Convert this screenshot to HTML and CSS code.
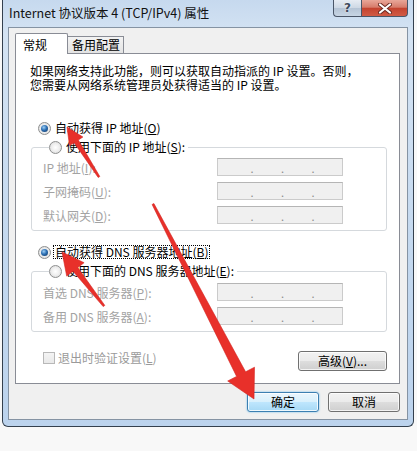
FILE: index.html
```html
<!DOCTYPE html>
<html lang="zh-CN">
<head>
<meta charset="utf-8">
<title>Internet 协议版本 4 (TCP/IPv4) 属性</title>
<link rel="stylesheet" href="styles.css">
</head>
<body>
<div class="window">
  <div class="titlebar">
    <div class="title">Internet 协议版本 4 (TCP/IPv4) 属性</div>
    <div class="caption-btns">
      <div class="cbtn help">?</div>
      <div class="cbtn close">
        <svg width="14" height="11" viewBox="0 0 14 11"><path d="M2 1.5 L12 9.5 M12 1.5 L2 9.5" stroke="#6b2a22" stroke-width="4" stroke-linecap="round"/><path d="M2 1.5 L12 9.5 M12 1.5 L2 9.5" stroke="#fff" stroke-width="2.2" stroke-linecap="round"/></svg>
      </div>
    </div>
  </div>
  <div class="client">
    <div class="tabs">
      <div class="tab active">常规</div>
      <div class="tab">备用配置</div>
    </div>
    <div class="panel">
      <p class="desc">如果网络支持此功能，则可以获取自动指派的 IP 设置。否则，<br>您需要从网络系统管理员处获得适当的 IP 设置。</p>

      <div class="radio-row r1"><span class="radio checked"></span><span class="lbl">自动获得 IP 地址(<u>O</u>)</span></div>
      <fieldset class="group g1">
        <legend><span class="radio"></span><span class="lbl">使用下面的 IP 地址(<u>S</u>):</span></legend>
        <div class="field"><span class="flabel">IP 地址(<u>I</u>):</span><span class="ipbox"><span class="seg"></span><span class="dot">.</span><span class="seg"></span><span class="dot">.</span><span class="seg"></span><span class="dot">.</span><span class="seg"></span></span></div>
        <div class="field"><span class="flabel">子网掩码(<u>U</u>):</span><span class="ipbox"><span class="seg"></span><span class="dot">.</span><span class="seg"></span><span class="dot">.</span><span class="seg"></span><span class="dot">.</span><span class="seg"></span></span></div>
        <div class="field"><span class="flabel">默认网关(<u>D</u>):</span><span class="ipbox"><span class="seg"></span><span class="dot">.</span><span class="seg"></span><span class="dot">.</span><span class="seg"></span><span class="dot">.</span><span class="seg"></span></span></div>
      </fieldset>

      <div class="radio-row r3"><span class="radio checked"></span><span class="lbl focus">自动获得 DNS 服务器地址(<u>B</u>)</span></div>
      <fieldset class="group g2">
        <legend><span class="radio"></span><span class="lbl">使用下面的 DNS 服务器地址(<u>E</u>):</span></legend>
        <div class="field"><span class="flabel">首选 DNS 服务器(<u>P</u>):</span><span class="ipbox"><span class="seg"></span><span class="dot">.</span><span class="seg"></span><span class="dot">.</span><span class="seg"></span><span class="dot">.</span><span class="seg"></span></span></div>
        <div class="field"><span class="flabel">备用 DNS 服务器(<u>A</u>):</span><span class="ipbox"><span class="seg"></span><span class="dot">.</span><span class="seg"></span><span class="dot">.</span><span class="seg"></span><span class="dot">.</span><span class="seg"></span></span></div>
      </fieldset>

      <div class="bottom-row">
        <div class="check"><span class="box"></span><span>退出时验证设置(<u>L</u>)</span></div>
        <button class="btn adv">高级(<u>V</u>)...</button>
      </div>
    </div>
    <div class="dlg-btns">
      <button class="btn default">确定</button>
      <button class="btn">取消</button>
    </div>
  </div>
</div>

<svg class="arrows" width="417" height="451" viewBox="0 0 417 451">
  <polygon points="99.8,176.5 78.3,140.0 82.9,137.0 67,127 69.5,145.6 74.1,142.7 98.2,177.5"/>
  <polygon points="104.8,305.4 77.8,267.6 84.1,262.7 62,252 66.7,276.1 73.0,271.2 103.2,306.6"/>
  <polygon points="153.9,203.5 245.6,371.8 254.5,367.2 254,399 227.7,381.0 236.6,376.4 152.1,204.5"/>
</svg>
</body>
</html>
```

FILE: styles.css
```css
* { box-sizing: border-box; }

html, body {
  margin: 0;
  padding: 0;
}

body {
  width: 417px;
  height: 451px;
  background: #f8f8f8;
  font-family: "Noto Sans CJK SC", "Noto Sans", sans-serif;
  font-size: 12px;
  color: #000;
  position: relative;
  overflow: hidden;
}

.window {
  margin-left: 2px;
  width: 412px;
  border: 1px solid #34404e;
  border-top: none;
  border-radius: 0 0 6px 6px;
  background: linear-gradient(180deg, #c6d9ee 0%, #d4e3f3 8%, #c3d8ef 60%, #bcd3ed 100%);
  padding: 0 5px 6px 5px;
}

.titlebar {
  height: 27px;
  display: flex;
  align-items: flex-start;
}

.title {
  padding: 4px 0 0 1px;
  line-height: 17px;
  font-size: 12.5px;
  color: #111;
  white-space: nowrap;
}

.caption-btns {
  margin-left: auto;
  display: flex;
}

.cbtn {
  height: 17px;
  border: 1px solid #4a5668;
  border-top: none;
  display: flex;
  align-items: center;
  justify-content: center;
}

.help {
  width: 28px;
  border-radius: 0 0 0 4px;
  border-right: none;
  background: linear-gradient(180deg, #e6ecf3 0%, #cdd8e4 50%, #b5c4d5 52%, #c7d5e4 100%);
  color: #3d4a5b;
  font-family: "DejaVu Sans", sans-serif;
  font-size: 12px;
  font-weight: bold;
  text-shadow: 0 0 2px #fff;
}

.close {
  width: 47px;
  border-radius: 0 0 4px 0;
  background: linear-gradient(180deg, #e9a799 0%, #d77c6b 45%, #c4432f 52%, #d15b45 100%);
}

.client {
  border: 1px solid #8593a3;
  background: #f0f0f0;
  padding: 5px 0 7px 0;
}

.tabs {
  display: flex;
  align-items: flex-end;
  height: 20px;
  margin-left: 6px;
}

.tab {
  border: 1px solid #898c95;
  border-bottom: none;
  background: linear-gradient(180deg, #f3f3f3, #e3e3e3);
  height: 17px;
  line-height: 15px;
  padding: 0 4px;
  width: 57px;
  margin-left: -1px;
  white-space: nowrap;
}

.tab.active {
  position: relative;
  z-index: 1;
  background: #fff;
  height: 21px;
  margin-bottom: -1px;
  margin-left: 0;
  width: 53px;
  padding: 2px 7px 0;
  line-height: 18px;
  border-radius: 2px 2px 0 0;
}

.panel {
  margin: 0 7px 0 6px;
  border: 1px solid #898c95;
  background: #fff;
  padding: 10px 12px 12px 14px;
}

.desc {
  margin: 0;
  line-height: 14px;
  white-space: nowrap;
}

.radio-row,
legend {
  display: flex;
  align-items: center;
  height: 16px;
  line-height: 16px;
  white-space: nowrap;
}

.radio-row {
  padding-left: 8px;
}

.r1 { margin-top: 28px; }
.r3 { margin-top: 13px; }

.radio {
  width: 13px;
  height: 13px;
  border-radius: 50%;
  border: 1px solid #8e8f8f;
  background: radial-gradient(circle at 50% 50%, #ffffff 0%, #f0f0f0 45%, #d4d4d4 100%);
  position: relative;
  flex: none;
}

.radio.checked::after {
  content: "";
  position: absolute;
  left: 2px;
  top: 2px;
  width: 7px;
  height: 7px;
  border-radius: 50%;
  background: radial-gradient(circle at 40% 35%, #9fd0f5 0%, #2c6fb4 45%, #0e2f58 100%);
}

.lbl {
  margin-left: 4px;
}

.lbl.focus {
  outline: 1px dotted #000;
  outline-offset: 0;
  line-height: 12px;
  padding: 0 1px;
  margin-left: 3px;
}

.group {
  margin: 3px 0 0 1px;
  border: 1px solid #d5d9dd;
  border-radius: 3px;
  padding: 3px 0 6px 11px;
  min-width: 0;
}

.group legend {
  margin-left: 6px;
  padding: 0 3px 0 0;
}

.g2 { padding-top: 4px; }

.field {
  display: flex;
  align-items: center;
  height: 18px;
  margin-bottom: 6px;
  color: #a3a3a3;
}

.field:last-child { margin-bottom: 0; }

.flabel {
  width: 174px;
  white-space: nowrap;
}

.ipbox {
  width: 126px;
  height: 18px;
  border: 1px solid #cbcbcb;
  border-top-color: #b5b5b5;
  background: #f0f0f0;
  display: flex;
  align-items: flex-end;
  padding: 0 0 1px 4px;
  color: #8a8a8a;
  line-height: 12px;
}

.seg { width: 30px; }
.dot { width: 2px; font-size: 11px; }

.bottom-row {
  margin-top: 19px;
  display: flex;
  align-items: flex-start;
  justify-content: space-between;
}

.check {
  display: flex;
  align-items: center;
  margin-left: 13px;
  margin-top: 1px;
  color: #9a9a9a;
  line-height: 12px;
  white-space: nowrap;
}

.box {
  width: 12px;
  height: 12px;
  border: 1px solid #b8b8b8;
  background: linear-gradient(180deg, #f4f4f4, #e9e9e9);
  margin-right: 3px;
}

.btn {
  font: inherit;
  color: #000;
  height: 20px;
  width: 72px;
  padding: 0;
  border: 1px solid #707070;
  border-radius: 3px;
  background: linear-gradient(180deg, #f2f2f2 0%, #ebebeb 48%, #dddddd 52%, #cfcfcf 100%);
  box-shadow: inset 0 0 0 1px rgba(255, 255, 255, 0.75);
  line-height: 16px;
  cursor: default;
}

.btn.adv {
  width: 89px;
}

.btn.default {
  border-color: #3c7fb1;
  background: linear-gradient(180deg, #eaf6fd 0%, #d9f0fc 48%, #bee6fd 52%, #a7d9f5 100%);
  box-shadow: inset 0 0 0 1px rgba(255, 255, 255, 0.8), 0 0 2px #62b7ea;
}

.dlg-btns {
  display: flex;
  justify-content: flex-end;
  gap: 9px;
  margin-top: 8px;
  padding-right: 7px;
}

.arrows {
  position: absolute;
  left: 0;
  top: 0;
  pointer-events: none;
}

.arrows polygon {
  fill: #e8302a;
  stroke: #d42420;
  stroke-width: 0.6;
  stroke-linejoin: round;
}
```
